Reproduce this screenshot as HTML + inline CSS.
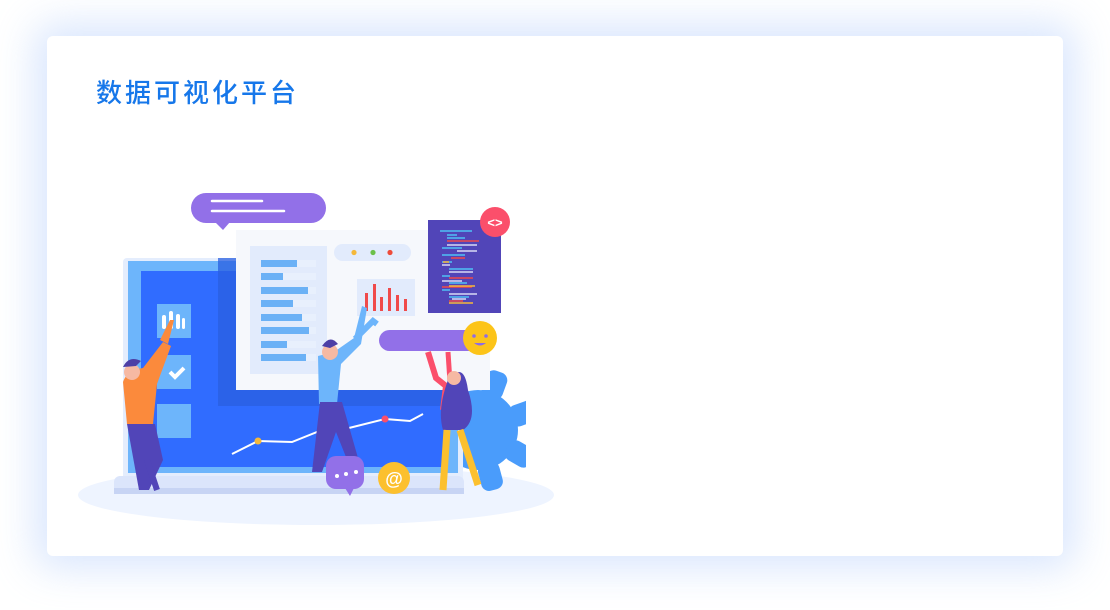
<!DOCTYPE html>
<html><head><meta charset="utf-8"><style>
html,body{margin:0;padding:0;width:1110px;height:610px;background:#fff;overflow:hidden}
.card{position:absolute;left:47px;top:36px;width:1016px;height:520px;background:#fff;border-radius:6px;box-shadow:0 0 40px 12px rgba(170,200,250,.45)}
.t{position:absolute;left:96px;top:76px;font-family:"Liberation Sans","Noto Sans CJK SC",sans-serif;font-size:26px;color:#1677ea;letter-spacing:3px;line-height:34px;font-weight:500}
svg{position:absolute;left:0;top:0}
</style></head><body>
<div class="card"></div>
<div class="t">数据可视化平台</div>
<svg width="1110" height="610" viewBox="0 0 1110 610">
<defs><clipPath id="gc"><rect x="462" y="360" width="64" height="140"/></clipPath></defs>
<ellipse cx="316" cy="495" rx="238" ry="30" fill="#eef4ff"/>
<g clip-path="url(#gc)" fill="#4a9cfb">
<circle cx="478" cy="430" r="40"/>
<g transform="translate(478 430)">
<rect x="-11" y="-62" width="22" height="28" rx="8" transform="rotate(20)"/>
<rect x="-11" y="-62" width="22" height="28" rx="8" transform="rotate(70)"/>
<rect x="-11" y="-62" width="22" height="28" rx="8" transform="rotate(120)"/>
<rect x="-11" y="-62" width="22" height="28" rx="8" transform="rotate(165)"/>
</g></g>
<rect x="123" y="258" width="340" height="226" rx="4" fill="#e4edfd"/>
<rect x="128" y="261" width="330" height="212" fill="#6db5fb"/>
<rect x="141" y="271" width="306" height="196" fill="#306cff"/>
<rect x="114" y="476" width="350" height="18" rx="6" fill="#dbe5fb"/>
<rect x="114" y="488" width="350" height="6" fill="#c7d4f4"/>
<rect x="218" y="258" width="250" height="148" fill="#2a5fe0" opacity=".75"/>
<rect x="236" y="230" width="254" height="160" fill="#f6f8fc"/>
<rect x="250" y="246" width="77" height="128" fill="#e2ebfc"/>
<g fill="#e8f0fd"><rect x="261" y="260" width="55" height="7"/><rect x="261" y="273" width="55" height="7"/><rect x="261" y="287" width="55" height="7"/><rect x="261" y="300" width="55" height="7"/><rect x="261" y="314" width="55" height="7"/><rect x="261" y="327" width="55" height="7"/><rect x="261" y="341" width="55" height="7"/><rect x="261" y="354" width="55" height="7"/></g>
<g fill="#6bb1f6"><rect x="261" y="260" width="36" height="7"/><rect x="261" y="273" width="22" height="7"/><rect x="261" y="287" width="47" height="7"/><rect x="261" y="300" width="32" height="7"/><rect x="261" y="314" width="41" height="7"/><rect x="261" y="327" width="48" height="7"/><rect x="261" y="341" width="26" height="7"/><rect x="261" y="354" width="45" height="7"/></g>
<rect x="334" y="244" width="77" height="17" rx="8.5" fill="#e2ebfc"/>
<circle cx="354" cy="252.5" r="2.6" fill="#f5b83a"/><circle cx="373" cy="252.5" r="2.6" fill="#6cc04a"/><circle cx="390" cy="252.5" r="2.6" fill="#ee4b3a"/>
<rect x="357" y="279" width="58" height="37" fill="#e2ebfc"/>
<g fill="#f04a4a"><rect x="365" y="293" width="3" height="18"/><rect x="373" y="284" width="3" height="27"/><rect x="380" y="297" width="3" height="14"/><rect x="388" y="288" width="3" height="23"/><rect x="396" y="295" width="3" height="16"/><rect x="404" y="299" width="3" height="12"/></g>
<rect x="428" y="220" width="73" height="93" fill="#5145b8"/>
<g stroke-width="1.5"><path d="M440 231h32M447 235h10M447 238h18M442 248h8M449 248h13M442 255h8M449 255h16M442 262h10M449 269h24M442 276h8M449 283h18M442 290h8M449 297h20" stroke="#4fc2f5"/><path d="M447 241h32M451 258h14M449 278h24M442 287h30M449 301h14" stroke="#f04a4a"/><path d="M447 245h30M457 251h20M442 265h8M449 272h24M442 281h20M449 294h28M452 299h14" stroke="#d7d9f5"/><path d="M443 262h6M449 286h26M449 303h24" stroke="#f5b83a"/></g>
<circle cx="495" cy="222" r="15" fill="#fb4f6b"/>
<text x="495" y="227" font-family="Liberation Sans,sans-serif" font-size="13" font-weight="bold" fill="#fff" text-anchor="middle">&lt;&gt;</text>
<rect x="191" y="193" width="135" height="30" rx="15" fill="#9270e8"/>
<path d="M215 222l8 8 7-8z" fill="#9270e8"/>
<path d="M212 201h50M212 211h72" stroke="#fff" stroke-width="2.5" stroke-linecap="round"/>
<rect x="157" y="304" width="34" height="34" fill="#6db5fb"/>
<g fill="#fff"><rect x="162" y="315" width="4" height="14" rx="2"/><rect x="169" y="311" width="4" height="18" rx="2"/><rect x="176" y="314" width="4" height="15" rx="2"/><rect x="182" y="318" width="3" height="11" rx="1.5"/></g>
<rect x="157" y="355" width="34" height="34" fill="#6db5fb"/>
<path d="M170 372l5 5 9-9" stroke="#fff" stroke-width="4" fill="none"/>
<rect x="157" y="404" width="34" height="34" fill="#6db5fb"/>
<polyline points="232,454 258,441 292,442 322,430 349,428 385,419 410,421 423,414" fill="none" stroke="#fff" stroke-width="2"/>
<circle cx="258" cy="441" r="3.5" fill="#f5b83a"/><circle cx="385" cy="419" r="3.5" fill="#fb4f6b"/>
<rect x="379" y="330" width="100" height="21" rx="10.5" fill="#9270e8"/>
<circle cx="480" cy="338" r="17" fill="#fcc419"/>
<circle cx="474" cy="336" r="1.8" fill="#8d6be8"/><circle cx="486" cy="336" r="1.8" fill="#8d6be8"/>
<path d="M474 343q6 5 12 0z" fill="#8d6be8"/>
<path d="M123 382q4 -12 20 -14l20 -26 8 4 -14 38 -4 40 -26 0z" fill="#fb8a3c"/>
<path d="M160 340l10 -20 4 0 -6 24z" fill="#fb8a3c"/>
<path d="M127 424h28l8 36 -14 30h-10z" fill="#5145b8"/>
<path d="M147 460l10 30" stroke="#5145b8" stroke-width="6"/>
<circle cx="132" cy="372" r="8" fill="#f6b9a3"/>
<path d="M123 367q6 -12 18 -6l-5 5z" fill="#4c3fa6"/>
<path d="M318 356l16 -4 20 -14 8 -32 5 2 -6 36 -20 20 -4 40 -18 0z" fill="#6db5fb"/>
<path d="M355 339l18 -18 4 3" stroke="#6db5fb" stroke-width="6" fill="none"/>
<path d="M320 402h22l20 70h-10l-16 -40 -14 40h-10z" fill="#5145b8"/>
<circle cx="330" cy="352" r="8" fill="#f6b9a3"/>
<path d="M322 346q8 -12 16 -2l-8 4z" fill="#4c3fa6"/>
<path d="M428 352l8 26 10 8 -3 24" stroke="#fb4f6b" stroke-width="6" fill="none"/>
<path d="M448 352l2 30" stroke="#fb4f6b" stroke-width="5"/>
<path d="M448 380q16 -20 20 10q10 30 -5 40h-20q-6 -20 5 -50z" fill="#5145b8"/>
<path d="M447 430l-4 60M460 430l18 55" stroke="#fcc02e" stroke-width="7" fill="none"/>
<circle cx="454" cy="378" r="7" fill="#f6b9a3"/>
<rect x="326" y="456" width="38" height="33" rx="10" fill="#9270e8"/>
<path d="M345 488l5 8 4 -8z" fill="#9270e8"/>
<circle cx="337" cy="476" r="2" fill="#fff"/><circle cx="346" cy="474" r="2" fill="#fff"/><circle cx="356" cy="472" r="2" fill="#fff"/>
<circle cx="394" cy="478" r="16" fill="#fcc02e"/>
<text x="394" y="485" font-family="Liberation Sans,sans-serif" font-size="18" font-weight="bold" fill="#fff" text-anchor="middle">@</text>
</svg>
</body></html>
